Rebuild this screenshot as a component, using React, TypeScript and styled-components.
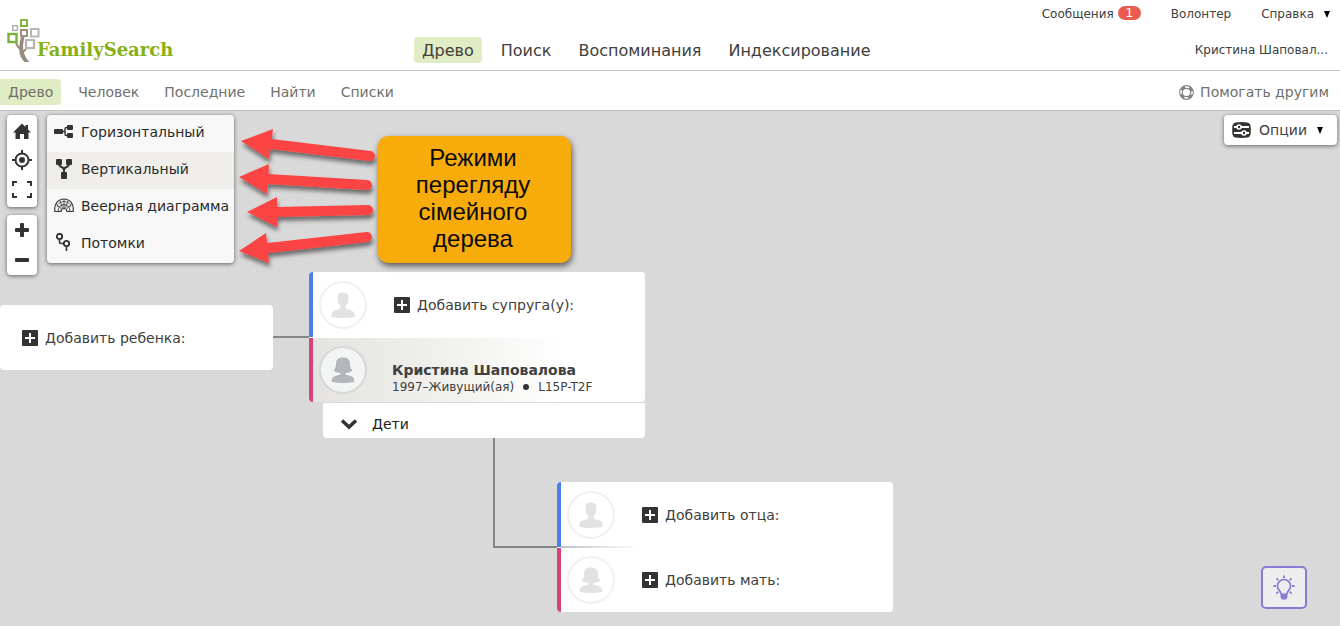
import React from 'react';
import styled, { createGlobalStyle } from 'styled-components';

const GlobalStyle = createGlobalStyle`
  *, *::before, *::after { box-sizing: border-box; }
  body {
    margin: 0;
    font-family: "DejaVu Sans", Verdana, sans-serif;
    color: #40403e;
    background: #fff;
  }
  button { font: inherit; color: inherit; border: 0; background: none; padding: 0; cursor: pointer; }
  a { color: inherit; text-decoration: none; }
  svg { display: block; flex: none; }
`;

const Page = styled.div`
  display: flex;
  flex-direction: column;
  min-height: 100vh;
`;

const Header = styled.header`
  display: flex;
  height: 71px;
  border-bottom: 1px solid #c8c8c8;
`;

const Brand = styled.a`
  display: flex;
  align-items: flex-start;
  flex: 0 0 414px;
  padding: 18px 0 0 6px;
`;

const BrandName = styled.span`
  margin: 20px 0 0 -4px;
  font: bold 18px/24px "DejaVu Serif", serif;
  color: #87b016;
`;

const MainNav = styled.nav`
  display: flex;
  align-items: flex-start;
  gap: 11px;
  padding-top: 37px;
`;

const MainLink = styled.a<{ $active?: boolean }>`
  padding: 2px 8px 0;
  border-radius: 4px;
  font-size: 16px;
  line-height: 24px;
  background: ${(p) => (p.$active ? '#e0ecc4' : 'transparent')};
`;

const Account = styled.div`
  display: flex;
  flex-direction: column;
  align-items: flex-end;
  gap: 20px;
  margin-left: auto;
  padding: 6px 8px 0 0;
  font-size: 12px;
  line-height: 16px;
`;

const AccountRow = styled.div`
  display: flex;
  gap: 30px;
`;

const AccountLink = styled.a`
  display: flex;
  gap: 4px;
`;

const HelpButton = styled.button`
  display: flex;
  align-items: center;
  gap: 8px;
`;

const Badge = styled.span`
  width: 23px;
  height: 14px;
  border-radius: 7px;
  background: #eb5c50;
  color: #fff;
  line-height: 14px;
  text-align: center;
`;

const UserName = styled.button`
  padding-right: 4px;
  white-space: nowrap;
`;

const SubNav = styled.nav`
  display: flex;
  align-items: center;
  gap: 9px;
  height: 40px;
  padding: 3px 11px 0 0;
  border-bottom: 1px solid #c0c0c0;
  color: #70706d;
  font-size: 14px;
`;

const SubLink = styled.a<{ $active?: boolean }>`
  padding: 0 8px;
  border-radius: 0 4px 4px 0;
  line-height: 26px;
  background: ${(p) => (p.$active ? '#e0ecc4' : 'transparent')};
`;

const HelpOthers = styled.a`
  display: flex;
  align-items: center;
  gap: 6px;
  margin-left: auto;
`;

const Canvas = styled.main`
  position: relative;
  flex: 1;
  min-height: 515px;
  overflow: hidden;
  background: #d9d9d9;
`;

const Overlay = styled.div`
  display: flex;
  align-items: flex-start;
  gap: 10px;
  padding: 4px 3px 0 7px;
`;

const ToolColumn = styled.div`
  display: flex;
  flex-direction: column;
  gap: 8px;
`;

const Panel = styled.div`
  background: #fff;
  border-radius: 4px;
  box-shadow: 0 1px 4px rgba(0, 0, 0, 0.55);
`;

const ToolGroup = styled(Panel)`
  display: flex;
  flex-direction: column;
  width: 30px;
`;

const ToolButton = styled.button<{ $h: number }>`
  display: flex;
  align-items: center;
  justify-content: center;
  height: ${(p) => p.$h}px;
`;

const ViewMenu = styled(Panel)`
  width: 187px;
  overflow: hidden;
  background: #f8f8f8;
`;

const ViewItem = styled.button<{ $active?: boolean }>`
  display: flex;
  align-items: center;
  gap: 7px;
  width: 100%;
  height: 37px;
  padding: 0 0 3px 7px;
  font-size: 14px;
  color: #2a2a2a;
  white-space: nowrap;
  background: ${(p) => (p.$active ? '#efeeea' : 'transparent')};
`;

const Options = styled(Panel).attrs({ as: 'button' })`
  display: flex;
  align-items: center;
  gap: 8px;
  height: 30px;
  margin-left: auto;
  padding: 0 12px 0 8px;
  background: #fff;
  font-size: 14px;
`;

const Arrow = styled.span`
  margin: 0 2px;
  width: 0;
  border: 3px solid transparent;
  border-top: 7px solid #000;
  border-bottom: 0;
`;

const Node = styled.section<{ $x: number; $y: number; $w: number }>`
  position: absolute;
  left: ${(p) => p.$x}px;
  top: ${(p) => p.$y}px;
  width: ${(p) => p.$w}px;
  border-radius: 4px;
  background: #fff;
  overflow: hidden;
`;

const ChildNode = styled(Node)`
  display: flex;
  align-items: center;
  height: 65px;
  padding-left: 20px;
`;

const ChildrenNode = styled(Node)`
  border-radius: 0 0 4px 4px;
`;

const PersonRow = styled.div<{ $tone: string; $focus?: boolean }>`
  display: flex;
  align-items: center;
  gap: 25px;
  height: 65px;
  padding-left: 6px;
  border-left: 4px solid ${(p) => p.$tone};
  background: ${(p) => (p.$focus ? 'linear-gradient(90deg, #e4e3df, #f2f2ef 45%, #fff 75%)' : '#fff')};
  & + & { height: 64px; margin-top: 1px; }
`;

const Avatar = styled.div<{ $focus?: boolean }>`
  display: flex;
  align-items: center;
  justify-content: center;
  width: 48px;
  height: 48px;
  flex: none;
  border: 2px solid ${(p) => (p.$focus ? '#d6d7d8' : '#f0f0f0')};
  border-radius: 50%;
  color: ${(p) => (p.$focus ? '#b4b7b9' : '#e2e2e2')};
  background: ${(p) => (p.$focus ? '#f3f4f4' : '#fff')};
`;

const AddButton = styled.button`
  display: flex;
  align-items: center;
  gap: 7px;
  padding: 0 2px;
  font-size: 14px;
  line-height: 20px;
`;

const PersonInfo = styled.div`
  padding-top: 15px;
`;

const PersonName = styled.a`
  display: block;
  font-size: 14px;
  font-weight: bold;
  line-height: 18px;
`;

const PersonMeta = styled.div`
  display: flex;
  align-items: center;
  gap: 9px;
  font-size: 12px;
  line-height: 16px;
`;

const Dot = styled.span`
  width: 6px;
  height: 6px;
  border-radius: 50%;
  background: #333331;
`;

const ChildrenButton = styled.button`
  display: flex;
  align-items: center;
  gap: 14px;
  width: 100%;
  height: 35px;
  padding: 6px 0 0 17px;
  font-size: 14px;
  color: #222;
`;

const Lines = styled.svg`
  position: absolute;
  left: 0;
  top: 0;
  pointer-events: none;
`;

const Callout = styled.aside`
  position: absolute;
  left: 378px;
  top: 25px;
  width: 193px;
  padding: 8px 24px 11px 21px;
  border-radius: 10px;
  background: #f8ac0b;
  box-shadow: 1px 3px 6px rgba(0, 0, 0, 0.6);
  color: #0b0b0b;
  font: 24px/27px "Liberation Sans", Arial, sans-serif;
  text-align: center;
`;

const TipButton = styled.button`
  position: absolute;
  right: 33px;
  bottom: 17px;
  display: flex;
  align-items: center;
  justify-content: center;
  width: 46px;
  height: 43px;
  border: 2px solid #877bd3;
  border-radius: 5px;
  background: #ededee;
  color: #877bd3;
`;

const LogoTree = () => (
  <svg width="35" height="46" viewBox="0 0 35 46" fill="none" aria-hidden="true">
    <path d="M10 25q1.500 4 5 7M20 31q-3 2-4 6" stroke="#8f8676" strokeWidth="2" />
    <path d="M15 19c-2.500 9-3 19 3.500 25h5c-5-5-7.500-12-6-20l1-5z" fill="#958c7e" />
    <rect x="15" y="2" width="6" height="6" stroke="#83b63b" strokeWidth="2" fill="#fff" />
    <rect x="6.800" y="7.800" width="4.600" height="4.600" stroke="#b5b6b4" strokeWidth="1.600" fill="#fff" />
    <rect x="15" y="12" width="6" height="6" stroke="#9b8f80" strokeWidth="2" fill="#fff" />
    <rect x="25" y="11" width="7.500" height="7.500" stroke="#b5b6b4" strokeWidth="2" fill="#fff" />
    <rect x="2.500" y="16" width="8" height="8" stroke="#77b13b" strokeWidth="2.400" fill="#fff" />
    <rect x="20" y="22" width="8" height="8" stroke="#b5b6b4" strokeWidth="2.200" fill="#fff" />
  </svg>
);

const HomeIcon = () => (
  <svg width="18" height="16" viewBox="0 0 18 16" fill="#333331" aria-hidden="true">
    <path d="M9 .5 12.500 4V2h2.500v4.500L18 9.500h-2.500V16H11v-5H7v5H2.500V9.500H0z" />
  </svg>
);

const TargetIcon = () => (
  <svg width="20" height="20" viewBox="0 0 20 20" fill="none" stroke="#333331" strokeWidth="2" aria-hidden="true">
    <circle cx="10" cy="10" r="6.500" />
    <circle cx="10" cy="10" r="3" fill="#333331" stroke="none" />
    <path d="M10 0v4M10 16v4M0 10h4M16 10h4" />
  </svg>
);

const ExpandIcon = () => (
  <svg width="20" height="17" viewBox="0 0 20 17" fill="none" stroke="#333331" strokeWidth="2" aria-hidden="true">
    <path d="M1 5V1h4M15 1h4v4M19 12v4h-4M5 16H1v-4" />
  </svg>
);

const PlusIcon = () => (
  <svg width="14" height="14" viewBox="0 0 14 14" fill="#333331" aria-hidden="true">
    <rect x="5" width="4" height="14" rx="1" />
    <rect y="5" width="14" height="4" rx="1" />
  </svg>
);

const MinusIcon = () => (
  <svg width="14" height="4" viewBox="0 0 14 4" aria-hidden="true">
    <rect width="14" height="4" rx="1" fill="#333331" />
  </svg>
);

const HorizontalIcon = () => (
  <svg width="20" height="20" viewBox="0 0 20 20" fill="#333331" aria-hidden="true">
    <rect x="0" y="7" width="9" height="5" rx="1" />
    <rect x="13" y="3" width="6" height="5" rx="1" />
    <rect x="13" y="11" width="6" height="5" rx="1" />
    <path d="M8 9.500h3M14 5.500h-1.500q-1.500 0-1.500 1.500v5q0 1.500 1.500 1.500H14" fill="none" stroke="#333331" strokeWidth="1.400" />
  </svg>
);

const VerticalIcon = () => (
  <svg width="20" height="20" viewBox="0 0 20 20" fill="#333331" aria-hidden="true">
    <rect x="2" y="0" width="6" height="6" rx="1" />
    <rect x="12" y="0" width="6" height="6" rx="1" />
    <rect x="7" y="13" width="6" height="7" rx="1" />
    <path d="M5 5c0 4 5 2 5 6v3M15 5c0 4-5 2-5 6" fill="none" stroke="#333331" strokeWidth="2" />
  </svg>
);

const FanIcon = () => (
  <svg width="20" height="20" viewBox="0 0 20 20" fill="none" stroke="#333331" strokeWidth="1.200" aria-hidden="true">
    <path d="M1 15.500C-.5 8 4.500 3 10 3s10.500 5 9 12.500h-6a3 3 0 0 0-6 0z" />
    <path d="M4 15a6 6.500 0 0 1 12 0M2.500 8.500l5 4.500M6 4.500l2.500 7.500M10 3v9M14 4.500l-2.500 7.500M17.500 8.500l-5 4.500" strokeWidth=".9" />
    <path d="M3 11a7 5.500 0 0 1 14 0" strokeWidth=".7" />
  </svg>
);

const DescendantsIcon = () => (
  <svg width="20" height="20" viewBox="0 0 20 20" fill="none" stroke="#333331" strokeWidth="1.800" aria-hidden="true">
    <circle cx="5.500" cy="3.500" r="2.700" />
    <circle cx="12.500" cy="10.500" r="2.700" />
    <path d="M5.500 6v3q0 1.500 1.500 1.500h3M12.500 13v5" strokeWidth="1.600" />
  </svg>
);

const OptionsIcon = () => (
  <svg width="19" height="16" viewBox="0 0 19 16" aria-hidden="true">
    <path d="M3.500.5Q9.500-.3 15.500.5q2.500.5 3 3 .6 4.500 0 9-.5 2.500-3 3-6 .8-12 0-2.500-.5-3-3-.6-4.500 0-9 .5-2.500 3-3z" fill="#333331" />
    <path d="M2 5h15M2 11h15" stroke="#fff" strokeWidth="2" />
    <circle cx="7" cy="5" r="2" fill="#333331" stroke="#fff" strokeWidth="1.600" />
    <circle cx="12" cy="11" r="2" fill="#333331" stroke="#fff" strokeWidth="1.600" />
  </svg>
);

const LifebuoyIcon = () => (
  <svg width="15" height="15" viewBox="0 0 15 15" fill="none" aria-hidden="true">
    <circle cx="7.500" cy="7.500" r="5.500" stroke="#85857f" strokeWidth="3.800" />
    <circle cx="7.500" cy="7.500" r="5.500" stroke="#fff" strokeWidth="1.600" strokeDasharray="4 4.640" strokeDashoffset="2" />
  </svg>
);

const AddIcon = () => (
  <svg width="16" height="16" viewBox="0 0 16 16" aria-hidden="true">
    <rect width="16" height="16" rx="1" fill="#333331" />
    <path d="M8 3v10M3 8h10" stroke="#fff" strokeWidth="2" />
  </svg>
);

const ChevronIcon = () => (
  <svg width="18" height="12" viewBox="0 0 18 12" fill="none" aria-hidden="true">
    <path d="M2 2.500 9 9l7-6.500" stroke="#333331" strokeWidth="3.500" />
  </svg>
);

const BulbIcon = () => (
  <svg width="22" height="26" viewBox="0 0 22 26" fill="none" stroke="currentColor" aria-hidden="true">
    <path d="M8 19c0-3-3.500-4-3.500-8a6.500 6.500 0 0 1 13 0c0 4-3.500 5-3.500 8" strokeWidth="1.700" />
    <path d="M7.500 18.500h7v3.500l-1.500 2.500H9L7.500 22z" fill="currentColor" stroke="none" />
    <path d="M11 .5v2.500M3.500 3.500l1.600 1.600M18.500 3.500l-1.600 1.600M.5 11H3M19 11h2.500M3.500 18.500l1.600-1.600M18.500 18.500l-1.600-1.600" strokeWidth="1.800" />
  </svg>
);

const ManIcon = () => (
  <svg width="24" height="26" viewBox="0 0 24 26" fill="currentColor" aria-hidden="true">
    <path d="M6.500 5C6.500 1.500 9 .5 12 .5s5.500 1 5.500 4.500l-.3 4c-.4 3-1.700 4-2.500 5v2.500c2 1.500 9 1 9 7V25q-12 2-23.400 0v-1.500c0-6 7-5.500 9-7V14c-.8-1-2.100-2-2.500-5z" />
  </svg>
);

const WomanIcon = () => (
  <svg width="24" height="26" viewBox="0 0 24 26" fill="currentColor" aria-hidden="true">
    <path d="M12 .5C7 .5 5 3 5 7c0 3-.8 5-2.500 6.500 1.500 1.800 4 2.200 7 2.500v1.500C6 19 .8 18.500.8 23.500V25q11.200 2 22.400 0v-1.500c0-5-5.200-4.500-8.700-6V16c3-.3 5.500-.7 7-2.500C19.800 12 19 10 19 7c0-4-2-6.500-7-6.500z" />
  </svg>
);

const BLUE = '#4a80e8';
const PINK = '#d6437a';

const views = [
  { label: 'Горизонтальный', Icon: HorizontalIcon },
  { label: 'Вертикальный', Icon: VerticalIcon, active: true },
  { label: 'Веерная диаграмма', Icon: FanIcon },
  { label: 'Потомки', Icon: DescendantsIcon },
];

const AddPerson = ({ label }: { label: string }) => (
  <AddButton>
    <AddIcon />
    {label}
  </AddButton>
);

export default function App() {
  return (
    <Page>
      <GlobalStyle />
      <Header>
        <Brand href="#">
          <LogoTree />
          <BrandName>FamilySearch</BrandName>
        </Brand>
        <MainNav>
          <MainLink href="#" $active>Древо</MainLink>
          <MainLink href="#">Поиск</MainLink>
          <MainLink href="#">Воспоминания</MainLink>
          <MainLink href="#">Индексирование</MainLink>
        </MainNav>
        <Account>
          <AccountRow>
            <AccountLink href="#">
              Сообщения <Badge>1</Badge>
            </AccountLink>
            <AccountLink href="#">Волонтер</AccountLink>
            <HelpButton>
              Справка <Arrow />
            </HelpButton>
          </AccountRow>
          <UserName>Кристина Шаповал...</UserName>
        </Account>
      </Header>

      <SubNav>
        <SubLink href="#" $active>Древо</SubLink>
        <SubLink href="#">Человек</SubLink>
        <SubLink href="#">Последние</SubLink>
        <SubLink href="#">Найти</SubLink>
        <SubLink href="#">Списки</SubLink>
        <HelpOthers href="#">
          <LifebuoyIcon />
          Помогать другим
        </HelpOthers>
      </SubNav>

      <Canvas>
        <Overlay>
          <ToolColumn>
            <ToolGroup>
              <ToolButton $h={32} aria-label="Домой"><HomeIcon /></ToolButton>
              <ToolButton $h={25} aria-label="Центрировать"><TargetIcon /></ToolButton>
              <ToolButton $h={35} aria-label="Во весь экран"><ExpandIcon /></ToolButton>
            </ToolGroup>
            <ToolGroup>
              <ToolButton $h={30} aria-label="Увеличить"><PlusIcon /></ToolButton>
              <ToolButton $h={30} aria-label="Уменьшить"><MinusIcon /></ToolButton>
            </ToolGroup>
          </ToolColumn>
          <ViewMenu>
            {views.map(({ label, Icon, active }) => (
              <ViewItem key={label} $active={active}>
                <Icon />
                {label}
              </ViewItem>
            ))}
          </ViewMenu>
          <Options>
            <OptionsIcon />
            Опции
            <Arrow />
          </Options>
        </Overlay>

        <Node $x={309} $y={161} $w={336}>
          <PersonRow $tone={BLUE}>
            <Avatar><ManIcon /></Avatar>
            <AddPerson label="Добавить супруга(у):" />
          </PersonRow>
          <PersonRow $tone={PINK} $focus>
            <Avatar $focus><WomanIcon /></Avatar>
            <PersonInfo>
              <PersonName href="#">Кристина Шаповалова</PersonName>
              <PersonMeta>
                <span>1997–Живущий(ая)</span>
                <Dot />
                <span>L15P-T2F</span>
              </PersonMeta>
            </PersonInfo>
          </PersonRow>
        </Node>
        <ChildrenNode $x={323} $y={292} $w={322}>
          <ChildrenButton>
            <ChevronIcon />
            Дети
          </ChildrenButton>
        </ChildrenNode>
        <ChildNode $x={0} $y={194} $w={273}>
          <AddPerson label="Добавить ребенка:" />
        </ChildNode>
        <Node $x={557} $y={371} $w={336}>
          <PersonRow $tone={BLUE}>
            <Avatar><ManIcon /></Avatar>
            <AddPerson label="Добавить отца:" />
          </PersonRow>
          <PersonRow $tone={PINK}>
            <Avatar><WomanIcon /></Avatar>
            <AddPerson label="Добавить мать:" />
          </PersonRow>
        </Node>

        <Lines width="650" height="515" viewBox="0 0 650 515" aria-hidden="true">
          <defs>
            <linearGradient id="fade">
              <stop offset="0" stopColor="#c0c0c0" />
              <stop offset="1" stopColor="#fff" />
            </linearGradient>
            <filter id="shade" x="-20%" y="-20%" width="140%" height="150%">
              <feDropShadow dx="1" dy="4" stdDeviation="2" floodColor="#000" floodOpacity="0.5" />
            </filter>
          </defs>
          <path d="M273 226H309M494 327V436H557" fill="none" stroke="#868686" strokeWidth="2" />
          <rect x="561" y="435" width="78" height="2" fill="url(#fade)" />
          <g fill="#fb4444" stroke="#fb4444" filter="url(#shade)">
            <path d="M241 30 273 18 269 48z" stroke="none" />
            <path d="M271 33 370 45" strokeWidth="10" strokeLinecap="round" />
            <path d="M239 66 269 53 267 83z" stroke="none" />
            <path d="M268 68 367 74" strokeWidth="10" strokeLinecap="round" />
            <path d="M247 101 277 86V116z" stroke="none" />
            <path d="M276 101 368 99" strokeWidth="10" strokeLinecap="round" />
            <path d="M239 140 266 122 269 152z" stroke="none" />
            <path d="M268 137 367 126" strokeWidth="10" strokeLinecap="round" />
          </g>
        </Lines>
        <Callout>Режими перегляду сімейного дерева</Callout>
        <TipButton aria-label="Подсказки"><BulbIcon /></TipButton>
      </Canvas>
    </Page>
  );
}
